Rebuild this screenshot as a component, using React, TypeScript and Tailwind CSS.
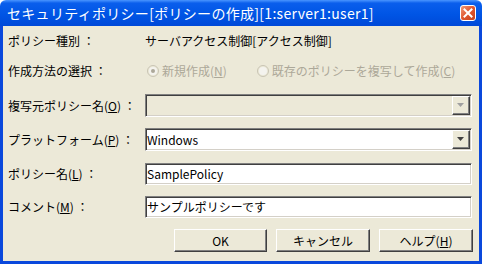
import React from 'react';

const font = "font-['Noto_Sans_CJK_JP','Noto_Sans_CJK_SC',sans-serif]";

function Label({ children }: { children: React.ReactNode }) {
  return <div className="w-[137px] shrink-0 text-black leading-none">{children}</div>;
}

function Sunken({ children, disabled }: { children?: React.ReactNode; disabled?: boolean }) {
  return (
    <div
      className={`w-[327px] h-full flex items-center border border-t-[#808080] border-l-[#808080] border-r-white border-b-white shadow-[inset_1px_1px_0_#404040,inset_-1px_-1px_0_#d4d0c8] ${
        disabled ? 'bg-[#ece9d8]' : 'bg-white'
      }`}
    >
      {children}
    </div>
  );
}

function DropButton({ disabled }: { disabled?: boolean }) {
  return (
    <div className="ml-auto mr-[1px] w-[18px] h-[19px] flex items-center justify-center bg-[#ece9d8] border border-t-white border-l-white border-r-[#404040] border-b-[#404040] shadow-[inset_-1px_-1px_0_#808080]">
      <svg width="8" height="5" viewBox="0 0 8 5">
        <path d="M0 0h7L3.5 4z" fill={disabled ? '#a0a0a0' : '#404040'} />
      </svg>
    </div>
  );
}

function Radio({ checked }: { checked?: boolean }) {
  return (
    <svg width="12" height="12" viewBox="0 0 12 12" className="shrink-0">
      <circle cx="6" cy="6" r="5.5" fill="#ece9d8" stroke="#c8c4b4" />
      <circle cx="6" cy="6" r="4" fill="#f4f3ee" />
      {checked && <circle cx="6" cy="6" r="2" fill="#aca899" />}
    </svg>
  );
}

function Button({ children }: { children: React.ReactNode }) {
  return (
    <button className="h-[23px] flex items-center justify-center bg-[#ece9d8] border border-t-white border-l-white border-r-[#404040] border-b-[#404040] shadow-[inset_-1px_-1px_0_#808080] text-black text-[12px] leading-none">
      {children}
    </button>
  );
}

export default function App() {
  return (
    <div className={`w-[482px] h-[264px] flex flex-col text-[12px] ${font}`}>
      {/* Title bar */}
      <div className="h-[26px] shrink-0 flex items-center justify-between pl-[7px] pr-[6px] rounded-t-[6px] bg-[linear-gradient(180deg,#4a95ff_0%,#0a5eec_12%,#0055e5_55%,#0049d8_100%)]">
        <span className="text-white text-[14px] leading-none tracking-[0.3px]">
          セキュリティポリシー[ポリシーの作成][1:server1:user1]
        </span>
        <div className="w-[16px] h-[16px] rounded-[3px] border border-white bg-[linear-gradient(135deg,#f09a7a_0%,#e0552e_50%,#c2401c_100%)] flex items-center justify-center">
          <svg width="10" height="10" viewBox="0 0 10 10">
            <path d="M1.5 1.5l7 7M8.5 1.5l-7 7" stroke="white" strokeWidth="2" strokeLinecap="square" />
          </svg>
        </div>
      </div>

      {/* Body */}
      <div className="flex-1 flex flex-col bg-[#ece9d8] border-x-[3px] border-b-[3px] border-[#0a48dc] pl-[5px] pr-[6px]">
        <div className="mt-[4px] h-[22px] flex items-center">
          <Label>ポリシー種別 ：</Label>
          <span className="leading-none text-black">サーバアクセス制御[アクセス制御]</span>
        </div>

        <div className="mt-[7px] h-[23px] flex items-center">
          <Label>作成方法の選択 ：</Label>
          <div className="flex items-center gap-[3px] ml-[2px] text-[#aca899] leading-none">
            <Radio checked />
            <span>
              新規作成(<u>N</u>)
            </span>
          </div>
          <div className="flex items-center gap-[3px] ml-[30px] text-[#aca899] leading-none">
            <Radio />
            <span>
              既存のポリシーを複写して作成(<u>C</u>)
            </span>
          </div>
        </div>

        <div className="mt-[12px] h-[23px] flex items-center">
          <Label>
            複写元ポリシー名(<u>O</u>) ：
          </Label>
          <Sunken disabled>
            <DropButton disabled />
          </Sunken>
        </div>

        <div className="mt-[11px] h-[23px] flex items-center">
          <Label>
            プラットフォーム(<u>P</u>) ：
          </Label>
          <Sunken>
            <span className="pl-[1px] leading-none text-black">Windows</span>
            <DropButton />
          </Sunken>
        </div>

        <div className="mt-[12px] h-[22px] flex items-center">
          <Label>
            ポリシー名(<u>L</u>) ：
          </Label>
          <Sunken>
            <span className="pl-[1px] leading-none text-black">SamplePolicy</span>
          </Sunken>
        </div>

        <div className="mt-[11px] h-[22px] flex items-center">
          <Label>
            コメント(<u>M</u>) ：
          </Label>
          <Sunken>
            <span className="pl-[1px] leading-none text-black">サンプルポリシーです</span>
          </Sunken>
        </div>

        <div className="mt-[11px] flex justify-end gap-[9px]">
          <div className="w-[93px] flex flex-col">
            <Button>OK</Button>
          </div>
          <div className="w-[94px] flex flex-col">
            <Button>キャンセル</Button>
          </div>
          <div className="w-[94px] flex flex-col">
            <Button>
              ヘルプ(<u>H</u>)
            </Button>
          </div>
        </div>
      </div>
    </div>
  );
}
